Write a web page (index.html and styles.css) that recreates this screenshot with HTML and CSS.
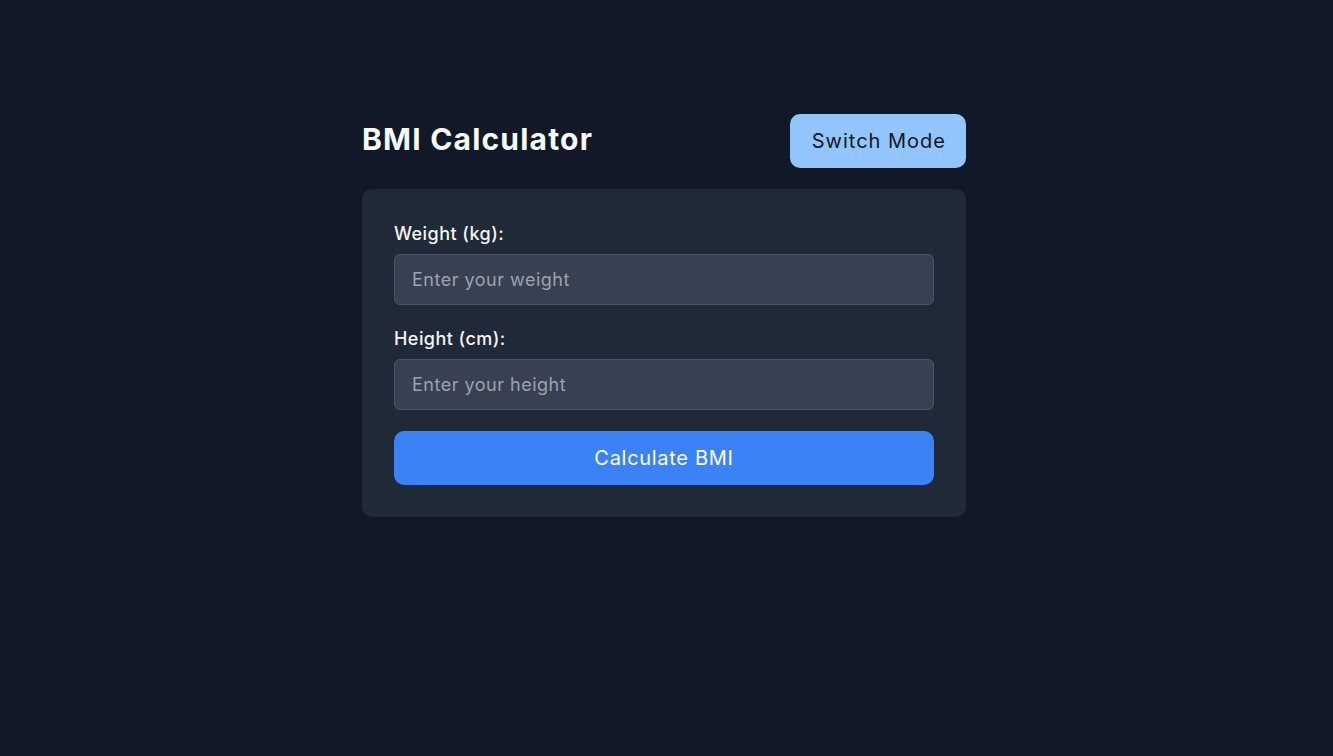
FILE: index.html
```html
<!DOCTYPE html>
<html lang="en">
<head>
<meta charset="utf-8">
<title>BMI Calculator</title>
<link rel="stylesheet" href="styles.css">
</head>
<body>
  <main class="app">
    <header class="app-header">
      <h1 class="title">BMI Calculator</h1>
      <button class="mode-btn" type="button">Switch Mode</button>
    </header>
    <section class="card">
      <div class="field">
        <label class="label" for="weight">Weight (kg):</label>
        <input class="input" id="weight" type="number" placeholder="Enter your weight">
      </div>
      <div class="field">
        <label class="label" for="height">Height (cm):</label>
        <input class="input" id="height" type="number" placeholder="Enter your height">
      </div>
      <button class="calc-btn" type="button">Calculate BMI</button>
    </section>
  </main>
</body>
</html>
```
FILE: styles.css
```css
* { box-sizing: border-box; }
html, body { margin: 0; padding: 0; }
body {
  background: #111827;
  font-family: Inter, "Noto Sans", sans-serif;
  color: #f9fafb;
  min-height: 756px;
  padding: 114px 5px 0 0;
}
.app {
  width: 604px;
  margin: 0 auto;
}
.app-header {
  display: flex;
  justify-content: space-between;
  align-items: center;
  margin-bottom: 21px;
}
.title {
  margin: 0 0 4px 0;
  font-size: 30px;
  line-height: 36px;
  font-weight: 700;
  letter-spacing: 1.2px;
  color: #f9fafb;
}
.mode-btn {
  font-family: inherit;
  font-size: 20px;
  line-height: 28px;
  letter-spacing: 1px;
  padding: 12px 19px 12px 21px;
  border: 1px solid transparent;
  border-radius: 10px;
  background: #93c5fd;
  color: #111827;
  cursor: pointer;
}
.card {
  background: #1f2937;
  border-radius: 10px;
  padding: 32px;
  display: flex;
  flex-direction: column;
}
.field {
  display: flex;
  flex-direction: column;
  margin-bottom: 21px;
}
.label {
  font-size: 18px;
  line-height: 26px;
  font-weight: 500;
  letter-spacing: 0.45px;
  color: #f3f4f6;
  margin-bottom: 7px;
}
.input {
  font-family: inherit;
  font-size: 18px;
  line-height: 27px;
  letter-spacing: 0.5px;
  height: 51px;
  padding: 11px 17px;
  background: #374151;
  border: 1px solid #4b5563;
  border-radius: 6px;
  color: #f9fafb;
  outline: none;
}
.input::placeholder { color: #9ca3af; }
.calc-btn {
  font-family: inherit;
  font-size: 20px;
  line-height: 28px;
  letter-spacing: 0.7px;
  height: 54px;
  border: none;
  border-radius: 10px;
  background: #3b82f6;
  color: #ffffff;
  cursor: pointer;
}
```
